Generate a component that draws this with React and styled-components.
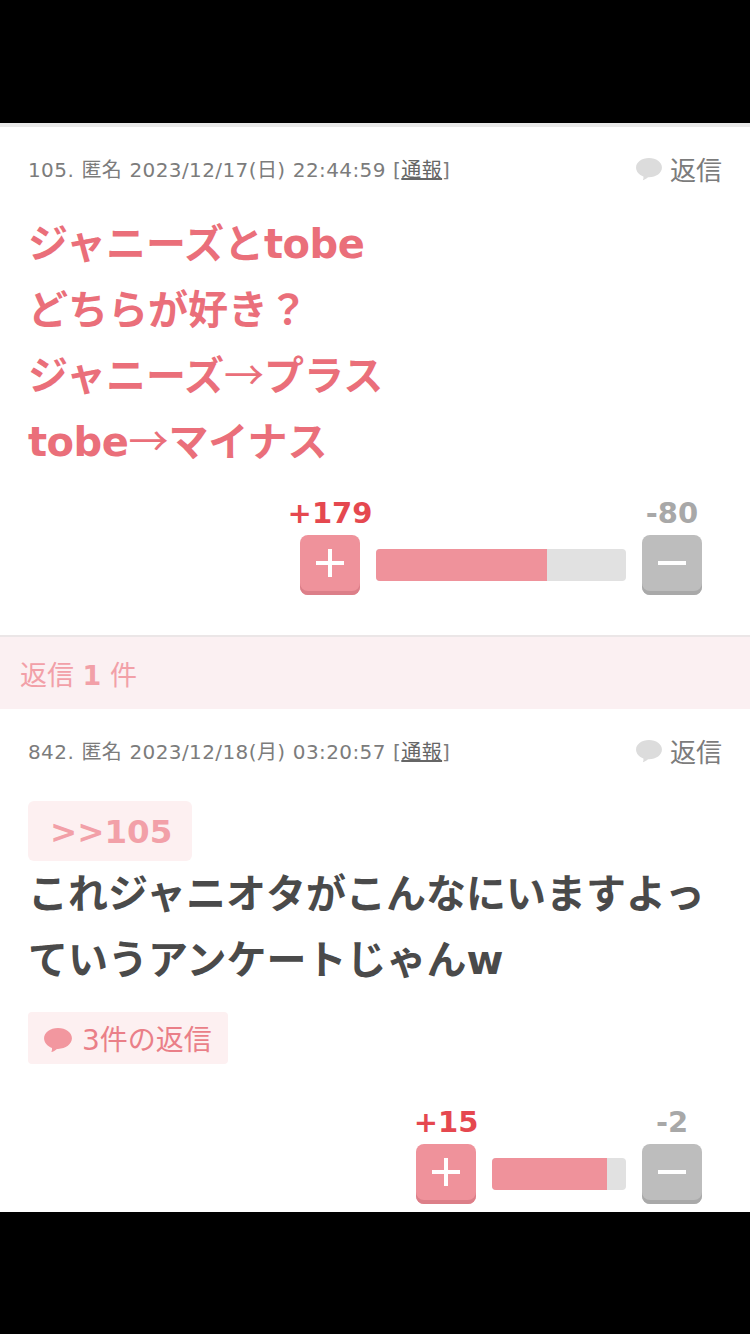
import React from 'react'
import styled, { createGlobalStyle } from 'styled-components'

const GlobalStyle = createGlobalStyle`
  html, body {
    margin: 0;
    padding: 0;
    background: #000;
  }
  body {
    font-family: "DejaVu Sans", "Noto Sans CJK JP", sans-serif;
  }
`

const Screen = styled.div`
  width: 750px;
  height: 1334px;
  padding-top: 123px;
  box-sizing: border-box;
  background: #000;
`

const Content = styled.div`
  height: 1089px;
  overflow: hidden;
  background: #fff;
  border-top: 4px solid #e9e9e9;
  box-sizing: border-box;
`

const Comment = styled.section`
  padding: 0 28px;
`

const FirstComment = styled(Comment)`
  height: 508px;
  border-bottom: 2px solid #ebe6e7;
`

const MetaRow = styled.div`
  display: flex;
  align-items: center;
  justify-content: space-between;
  height: 42px;
  padding-top: ${p => p.$top}px;
`

const Meta = styled.div`
  font-size: 20px;
  letter-spacing: 0.4px;
  word-spacing: 0.5px;
  color: #7c7c7c;
  white-space: nowrap;
  u {
    color: #666;
  }
`

const ReplyLink = styled.div`
  display: flex;
  align-items: center;
  gap: 8px;
  font-size: 26px;
  color: #7c7c7c;
  svg {
    margin-top: 2px;
  }
`

const Body = styled.div`
  margin-top: ${p => p.$top}px;
  font-size: 40px;
  font-weight: 700;
  line-height: 66px;
  color: ${p => p.$color};
  white-space: nowrap;
`

const Latin = styled.span`
  letter-spacing: -0.5px;
`

const Arrow = styled.span`
  font-family: "Noto Sans CJK JP", sans-serif;
  font-weight: 400;
  line-height: 1;
`

const Anchor = styled.div`
  display: block;
  width: fit-content;
  height: 60px;
  padding: 0 20px 0 22px;
  line-height: 63px;
  font-size: 32.5px;
  font-weight: 700;
  color: #f2a0a8;
  background: #fdf0f1;
  border-radius: 6px;
`

const ReplyCount = styled.div`
  display: inline-flex;
  align-items: center;
  gap: 10px;
  height: 52px;
  margin-top: 19px;
  padding: 0 16px;
  font-size: 28px;
  color: #ea7f88;
  background: #fdf0f1;
  border-radius: 4px;
  svg {
    margin-top: 4px;
  }
`

const Votes = styled.div`
  display: flex;
  justify-content: flex-end;
  gap: 16px;
  padding-right: 20px;
  margin-top: ${p => p.$top}px;
`

const VoteColumn = styled.div`
  position: relative;
  width: 60px;
  height: 60px;
`

const VoteCount = styled.div`
  position: absolute;
  left: 50%;
  bottom: 65px;
  transform: translateX(-50%);
  font-size: 29px;
  font-weight: 700;
  line-height: 34px;
  white-space: nowrap;
  color: ${p => p.$color};
`

const VoteButton = styled.div`
  display: flex;
  align-items: center;
  justify-content: center;
  width: 60px;
  height: 60px;
  box-sizing: border-box;
  padding-bottom: 4px;
  border-radius: 8px;
  background: ${p => p.$color};
  box-shadow: inset 0 -4px 0 ${p => p.$shade};
`

const Bar = styled.div`
  align-self: center;
  width: ${p => p.$width}px;
  height: 32px;
  border-radius: 4px;
  overflow: hidden;
  background: #e1e1e1;
`

const BarFill = styled.div`
  height: 100%;
  background: #ef929b;
`

const RepliesHeader = styled.div`
  height: 72px;
  padding-left: 20px;
  line-height: 78px;
  font-size: 27px;
  color: #f2a0a8;
  background: #fbf0f2;
  b {
    font-weight: 700;
  }
`

const Bubble = ({ color, width }) => (
  <svg width={width} height={width * 0.92} viewBox="0 0 26 24">
    <path
      fill={color}
      d="M13 1C20.200 1 26 5.200 26 10.600C26 16 20.200 20.400 13 20.400L12 20.400C10.500 21.800 8.500 23 6.800 23.400C7.400 22.200 7.600 20.800 7.400 19.600C3 18 0 14.600 0 10.600C0 5.200 5.800 1 13 1Z"
    />
  </svg>
)

const Plus = () => (
  <svg width="30" height="30" viewBox="0 0 30 30">
    <path fill="#fff" d="M13 1H17V13H29V17H17V29H13V17H1V13H13Z" />
  </svg>
)

const Minus = () => (
  <svg width="30" height="30" viewBox="0 0 30 30">
    <path fill="#fff" d="M1 13H29V17H1Z" />
  </svg>
)

const VoteBar = ({ top, plus, minus, width, percent }) => (
  <Votes $top={top}>
    <VoteColumn>
      <VoteCount $color="#e5484f">{plus}</VoteCount>
      <VoteButton $color="#ef929b" $shade="#dc7f89"><Plus /></VoteButton>
    </VoteColumn>
    <Bar $width={width}>
      <BarFill style={{ width: `${percent}%` }} />
    </Bar>
    <VoteColumn>
      <VoteCount $color="#a8a8a8">{minus}</VoteCount>
      <VoteButton $color="#bdbdbd" $shade="#a9a9a9"><Minus /></VoteButton>
    </VoteColumn>
  </Votes>
)

const MetaLine = ({ top, no, date }) => (
  <MetaRow $top={top}>
    <Meta>{no}. 匿名 {date} [<u>通報</u>]</Meta>
    <ReplyLink><Bubble color="#dcdcdc" width={26} />返信</ReplyLink>
  </MetaRow>
)

export default function App() {
  return (
    <Screen>
      <GlobalStyle />
      <Content>
        <FirstComment>
          <MetaLine top={20} no="105" date="2023/12/17(日) 22:44:59" />
          <Body $top={22} $color="#ea6f7a">
            ジャニーズと<Latin>tobe</Latin><br />
            どちらが好き？<br />
            ジャニーズ<Arrow>→</Arrow>プラス<br />
            <Latin>tobe</Latin><Arrow>→</Arrow>マイナス
          </Body>
          <VoteBar top={60} plus="+179" minus="-80" width={250} percent={68.4} />
        </FirstComment>
        <RepliesHeader>返信 <b>1</b> 件</RepliesHeader>
        <Comment>
          <MetaLine top={20} no="842" date="2023/12/18(月) 03:20:57" />
          <Body $top={30} $color="#4a4a4a">
            <Anchor>&gt;&gt;105</Anchor>
            これジャニオタがこんなにいますよっ<br />
            ていうアンケートじゃんw
          </Body>
          <ReplyCount><Bubble color="#f2979f" width={28} />3件の返信</ReplyCount>
          <VoteBar top={80} plus="+15" minus="-2" width={134} percent={86} />
        </Comment>
      </Content>
    </Screen>
  )
}
